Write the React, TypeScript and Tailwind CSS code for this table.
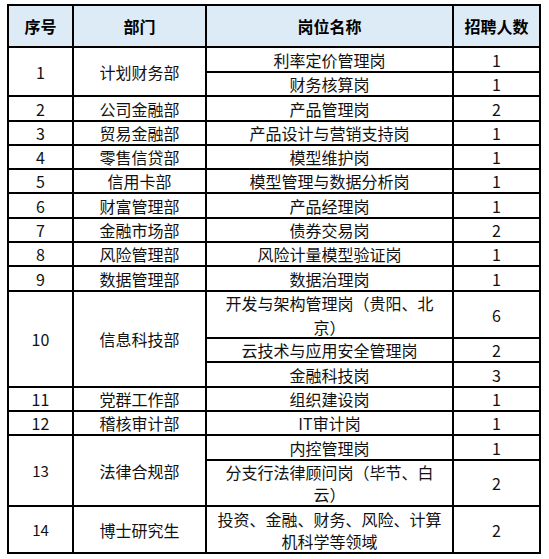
import React from "react";

type Cell = { text: React.ReactNode; span?: string; cls?: string };

const H = "flex items-center justify-center text-center bg-white";

export default function App() {
  const cells: Cell[] = [
    // row 1
    { text: "1", span: "row-span-2" },
    { text: "计划财务部", span: "row-span-2" },
    { text: "利率定价管理岗" },
    { text: "1" },
    { text: "财务核算岗" },
    { text: "1" },
    // 2
    { text: "2" },
    { text: "公司金融部" },
    { text: "产品管理岗" },
    { text: "2" },
    // 3
    { text: "3" },
    { text: "贸易金融部" },
    { text: "产品设计与营销支持岗" },
    { text: "1" },
    // 4
    { text: "4" },
    { text: "零售信贷部" },
    { text: "模型维护岗" },
    { text: "1" },
    // 5
    { text: "5" },
    { text: "信用卡部" },
    { text: "模型管理与数据分析岗" },
    { text: "1" },
    // 6
    { text: "6" },
    { text: "财富管理部" },
    { text: "产品经理岗" },
    { text: "1" },
    // 7
    { text: "7" },
    { text: "金融市场部" },
    { text: "债券交易岗" },
    { text: "2" },
    // 8
    { text: "8" },
    { text: "风险管理部" },
    { text: "风险计量模型验证岗" },
    { text: "1" },
    // 9
    { text: "9" },
    { text: "数据管理部" },
    { text: "数据治理岗" },
    { text: "1" },
    // 10
    { text: "10", span: "row-span-3" },
    { text: "信息科技部", span: "row-span-3" },
    {
      text: (
        <span className="leading-[24px]">
          开发与架构管理岗（贵阳、北
          <br />
          京）
        </span>
      ),
    },
    { text: "6" },
    { text: "云技术与应用安全管理岗" },
    { text: "2" },
    { text: "金融科技岗" },
    { text: "3" },
    // 11
    { text: "11" },
    { text: "党群工作部" },
    { text: "组织建设岗" },
    { text: "1" },
    // 12
    { text: "12" },
    { text: "稽核审计部" },
    { text: "IT审计岗" },
    { text: "1" },
    // 13
    { text: "13", span: "row-span-2", cls: "text-[15px]" },
    { text: "法律合规部", span: "row-span-2" },
    { text: "内控管理岗" },
    { text: "1" },
    {
      text: (
        <span className="leading-[22px]">
          分支行法律顾问岗（毕节、白
          <br />
          云）
        </span>
      ),
    },
    { text: "2" },
    // 14
    { text: "14", cls: "text-[15px]" },
    { text: "博士研究生" },
    {
      text: (
        <span className="leading-[22px]">
          投资、金融、财务、风险、计算
          <br />
          机科学等领域
        </span>
      ),
    },
    { text: "2" },
  ];

  return (
    <div className="min-h-[559px] w-[549px] bg-white pt-[4px] pl-[7px] font-['Noto_Sans_CJK_SC','Microsoft_YaHei',sans-serif] text-[16px] text-[#111]">
      <div className="grid w-[534px] grid-cols-[63px_131px_245px_85px] grid-rows-[40px_23px_22px_23px_22px_22px_22px_23px_22px_22px_23px_45px_22px_23px_22px_22px_23px_44px_45px] gap-[2px] bg-black p-[2px]">
        <div className="flex items-center justify-center bg-[#DDEBF7] font-bold text-black">序号</div>
        <div className="flex items-center justify-center bg-[#DDEBF7] font-bold text-black">部门</div>
        <div className="flex items-center justify-center bg-[#DDEBF7] font-bold text-black">岗位名称</div>
        <div className="flex items-center justify-center bg-[#DDEBF7] font-bold text-black">招聘人数</div>
        {cells.map((c, i) => (
          <div key={i} className={`${H} leading-none ${c.span ?? ""} ${c.cls ?? ""}`}>
            {c.text}
          </div>
        ))}
      </div>
    </div>
  );
}
